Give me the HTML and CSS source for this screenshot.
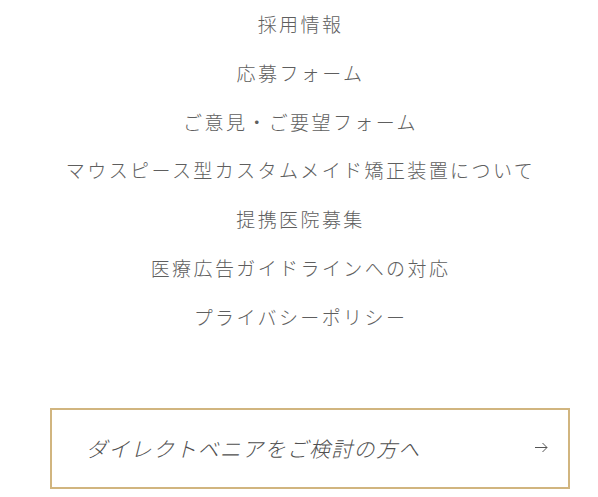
FILE: index.html
```html
<!DOCTYPE html>
<html lang="ja">
<head>
<meta charset="utf-8">
<title>Footer links</title>
<link rel="stylesheet" href="styles.css">
</head>
<body>
<nav class="links">
  <ul class="link-list">
    <li><a href="#">採用情報</a></li>
    <li><a href="#">応募フォーム</a></li>
    <li><a href="#">ご意見・ご要望フォーム</a></li>
    <li><a href="#">マウスピース型カスタムメイド矯正装置について</a></li>
    <li><a href="#">提携医院募集</a></li>
    <li><a href="#">医療広告ガイドラインへの対応</a></li>
    <li><a href="#">プライバシーポリシー</a></li>
  </ul>
</nav>
<a class="cta" href="#">
  <span class="cta-text">ダイレクトベニアをご検討の方へ</span>
  <svg class="cta-arrow" width="13" height="11" viewBox="0 0 13 11" aria-hidden="true">
    <path d="M0 5.5 H12 M7.5 1 L12 5.5 L7.5 10" fill="none" stroke="#555" stroke-width="1"/>
  </svg>
</a>
</body>
</html>
```
FILE: styles.css
```css
html, body {
  margin: 0;
  padding: 0;
  background: #ffffff;
}
body {
  font-family: "Noto Sans CJK JP", "Noto Sans", sans-serif;
  color: #5e5e5e;
}
.links {
  display: flex;
  justify-content: center;
}
.link-list {
  list-style: none;
  margin: 0;
  padding: 0;
  text-align: center;
}
.link-list li {
  line-height: 48.8px;
  font-size: 19px;
  font-weight: 300;
  letter-spacing: 2.4px;
  padding-left: 3px;
}
.link-list a {
  color: #5e5e5e;
  text-decoration: none;
}
.cta {
  display: flex;
  align-items: center;
  justify-content: space-between;
  box-sizing: border-box;
  width: 520px;
  height: 81px;
  margin: 66px 0 0 50px;
  padding: 0 20px 0 34px;
  border: 2px solid #d1b57f;
  text-decoration: none;
  color: #505050;
}
.cta-text {
  font-family: "Liberation Serif", "Noto Sans CJK JP", serif;
  font-size: 21px;
  font-style: italic;
  font-weight: 300;
  letter-spacing: 1.3px;
}
.cta-arrow {
  display: block;
  margin-top: -2px;
}
```
